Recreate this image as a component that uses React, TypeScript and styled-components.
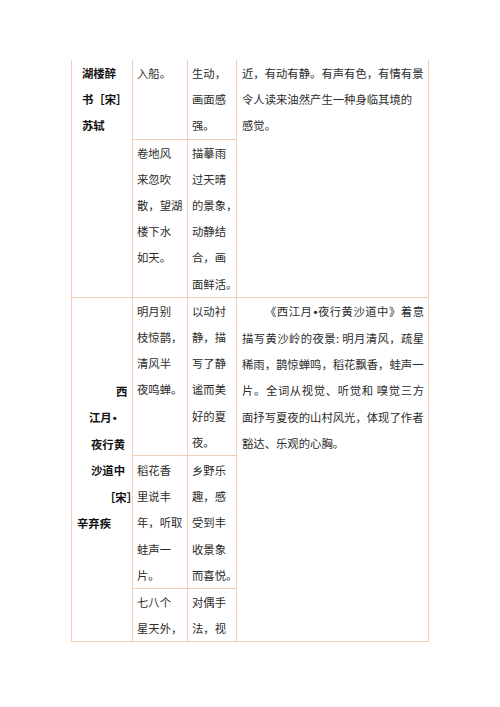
import { FC, ReactNode } from 'react';
import styled, { createGlobalStyle, css } from 'styled-components';

const rule = '#f3cdb6';

const GlobalStyle = createGlobalStyle`
  html, body {
    margin: 0;
    padding: 0;
    background: #fff;
  }
  body {
    font-family: "Noto Sans CJK SC", "Noto Sans", sans-serif;
  }
`;

const Page = styled.div`
  width: 500px;
  min-height: 707px;
  box-sizing: border-box;
  padding: 60px 0 0 71px;
  background: #fff;
`;

const Table = styled.div`
  display: grid;
  grid-template-columns: 61px 55px 49px 192px;
  width: max-content;
  border-left: 1px solid ${rule};
  font-size: 11.35px;
  line-height: 26.2px;
  color: #2b2b2b;
`;

const Cell = styled.div<{ $col: number; $span?: number; $top?: number; $pad?: number; $bold?: boolean }>`
  grid-column: ${({ $col }) => $col};
  grid-row: span ${({ $span }) => $span ?? 1};
  box-sizing: border-box;
  min-width: 0;
  border-right: 1px solid ${rule};
  border-bottom: 1px solid ${rule};
  padding: ${({ $top }) => $top ?? 0}px 4px 0 ${({ $pad }) => $pad ?? 4}px;
  ${({ $bold }) => $bold && css`
    font-weight: 700;
    color: #111;
  `}
`;

const Line = styled.div<{ $indent?: number; $justify?: boolean }>`
  padding-left: ${({ $indent }) => $indent ?? 0}px;
  ${({ $justify }) => $justify
    ? css`
      text-align: justify;
      text-align-last: justify;
    `
    : css`
      white-space: nowrap;
    `}
`;

// narrow western bullet, the CJK one is a full em wide
const Dot = styled.span`
  font-family: "Liberation Sans", Arial, sans-serif;
  font-weight: 700;
  padding-left: 1px;
`;

type L = { t: ReactNode; i?: number; j?: boolean };

const Lines: FC<{ lines: (string | L)[] }> = ({ lines }) => (
  <>
    {lines.map((l, k) => {
      const v = typeof l === 'string' ? { t: l } : l;
      return <Line key={k} $indent={v.i} $justify={v.j}>{v.t}</Line>;
    })}
  </>
);

const App: FC = () => (
  <Page>
    <GlobalStyle />
    <Table>
      <Cell $col={1} $span={2} $bold $pad={10}>
        <Lines lines={['湖楼醉', '书［宋］', '苏轼']} />
      </Cell>
      <Cell $col={2}><Lines lines={['入船。']} /></Cell>
      <Cell $col={3}><Lines lines={['生动，', '画面感', '强。']} /></Cell>
      <Cell $col={4} $span={2} $pad={5}>
        <Lines lines={['近，有动有静。有声有色，有情有景', '令人读来油然产生一种身临其境的', '感觉。']} />
      </Cell>
      <Cell $col={2}><Lines lines={['卷地风', '来忽吹', '散，望湖', '楼下水', '如天。']} /></Cell>
      <Cell $col={3}><Lines lines={['描摹雨', '过天晴', '的景象，', '动静结', '合，画', '面鲜活。']} /></Cell>

      <Cell $col={1} $span={3} $bold $pad={0} $top={80}>
        <Lines
          lines={[
            { t: '西', i: 44 },
            { t: <>江月<Dot>•</Dot></>, i: 17 },
            { t: '夜行黄', i: 19 },
            { t: '沙道中', i: 19 },
            { t: '［宋］', i: 32 },
            { t: '辛弃疾', i: 5 },
          ]}
        />
      </Cell>
      <Cell $col={2}><Lines lines={['明月别', '枝惊鹊，', '清风半', '夜鸣蝉。']} /></Cell>
      <Cell $col={3}><Lines lines={['以动衬', '静，描', '写了静', '谧而美', '好的夏', '夜。']} /></Cell>
      <Cell $col={4} $span={3} $pad={5}>
        <Lines
          lines={[
            { t: <>《西江月<Dot>•</Dot>夜行黄沙道中》着意</>, i: 23, j: true },
            { t: '描写黄沙岭的夜景: 明月清风，疏星', j: true },
            '稀雨，鹊惊蝉鸣，稻花飘香，蛙声一',
            { t: '片。全词从视觉、听觉和 嗅觉三方', j: true },
            '面抒写夏夜的山村风光，体现了作者',
            '豁达、乐观的心胸。',
          ]}
        />
      </Cell>
      <Cell $col={2} $top={1}><Lines lines={['稻花香', '里说丰', '年，听取', '蛙声一', '片。']} /></Cell>
      <Cell $col={3} $top={1}><Lines lines={['乡野乐', '趣，感', '受到丰', '收景象', '而喜悦。']} /></Cell>
      <Cell $col={2}><Lines lines={['七八个', '星天外，']} /></Cell>
      <Cell $col={3}><Lines lines={['对偶手', '法，视']} /></Cell>
    </Table>
  </Page>
);

export default App;
